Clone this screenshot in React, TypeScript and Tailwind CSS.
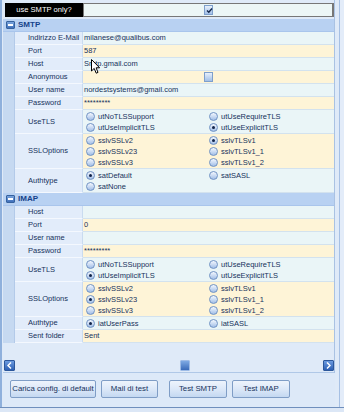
import React from 'react';

function Radio({ checked }: { checked?: boolean }) {
  return (
    <span className="relative inline-block w-[9px] h-[9px] shrink-0 rounded-full border border-[#6f92c4] bg-gradient-to-b from-[#f4f8fe] to-[#a3bfe7]">
      {checked && <span className="absolute left-[2px] top-[2px] w-[3px] h-[3px] rounded-full bg-[#0f2247]" />}
    </span>
  );
}

function Opt({ label, checked }: { label: string; checked?: boolean }) {
  return (
    <div className="flex items-center gap-[3px] h-[11px]">
      <Radio checked={checked} />
      <span className="whitespace-nowrap">{label}</span>
    </div>
  );
}

function Checkbox({ checked }: { checked?: boolean }) {
  return (
    <span className="relative inline-block w-[9px] h-[10px] border border-[#7e9fcc] bg-gradient-to-b from-[#e8f0fb] to-[#a2bfe7]">
      {checked && (
        <svg className="absolute left-[1px] top-[1px]" width="7" height="7" viewBox="0 0 7 7">
          <path d="M1 3.5 L2.8 5.3 L6 1.5" fill="none" stroke="#15294d" strokeWidth="1.4" />
        </svg>
      )}
    </span>
  );
}

type RowProps = {
  label: string;
  cream?: boolean;
  h: string;
  children?: React.ReactNode;
  multi?: boolean;
};

function Row({ label, cream, h, children, multi }: RowProps) {
  return (
    <div className={`flex ${h}`}>
      <div className="w-[68px] flex items-center pl-[13px] bg-[#e2ecfa] border-b border-r border-b-[#f4f8fe] border-r-[#c9dbf0]">
        <span className="whitespace-nowrap">{label}</span>
      </div>
      <div
        className={`flex-1 border-b border-[#d3e2ee] ${cream ? 'bg-[#fef4d7]' : 'bg-[#eaf5f7]'} ${
          multi ? 'flex flex-col pt-[1px] pl-[3px]' : 'flex items-center pl-[1px]'
        }`}
      >
        {children}
      </div>
    </div>
  );
}

function Pair({ a, b }: { a: [string, boolean?]; b?: [string, boolean?] }) {
  return (
    <div className="grid grid-cols-[123px_1fr]">
      <Opt label={a[0]} checked={a[1]} />
      {b ? <Opt label={b[0]} checked={b[1]} /> : <div />}
    </div>
  );
}

function GroupHeader({ title }: { title: string }) {
  return (
    <div className="h-[13px] flex items-center bg-[#b8d1f2] border-b border-[#a9c5ec]">
      <span className="ml-[3px] w-[9px] h-[8px] rounded-[1px] bg-gradient-to-b from-[#7aa4dd] to-[#3f6fba] border border-[#35629f] flex items-center justify-center">
        <span className="w-[5px] h-[1.5px] bg-white" />
      </span>
      <span className="ml-[3px] font-bold text-[8px] text-[#15428b]">{title}</span>
    </div>
  );
}

function ArrowBtn({ dir }: { dir: 'l' | 'r' }) {
  return (
    <div className="w-[11px] h-[11px] rounded-[1px] bg-gradient-to-b from-[#6c9be0] to-[#2d5fb3] border border-[#2c579b] flex items-center justify-center">
      <svg width="5" height="7" viewBox="0 0 5 7">
        <path d={dir === 'l' ? 'M4 0.5 L1 3.5 L4 6.5' : 'M1 0.5 L4 3.5 L1 6.5'} fill="none" stroke="#fff" strokeWidth="1.5" />
      </svg>
    </div>
  );
}

function Btn({ w, children }: { w: string; children: React.ReactNode }) {
  return (
    <div
      className={`${w} h-[18px] rounded-[2px] border border-[#7f9dc6] bg-gradient-to-b from-[#eef4fc] via-[#dce8f8] to-[#c4d8f1] flex items-center justify-center text-[7.8px] text-[#17325c] whitespace-nowrap`}
    >
      {children}
    </div>
  );
}

export default function App() {
  return (
    <div className="w-[344px] h-[412px] flex flex-col bg-[#dbe7f7] font-['Liberation_Sans',Arial,sans-serif] text-[7.5px] text-[#17325c] leading-none overflow-hidden relative">
      <div className="h-[407px] flex">
        <div className="w-[2px] bg-[#8fb0dc]" />
        <div className="w-[333px] flex flex-col">
          <div className="pl-[1px] flex flex-col border-r border-[#a9c2e3] bg-[#dfeaf8]">
            <div className="h-[3px]" />
            <div className="flex h-[14px] pl-[2px]">
              <div className="w-[78px] bg-black text-white flex items-center justify-center text-[7.6px]">use SMTP only?</div>
              <div className="flex-1 bg-[#ecf6f6] border border-r-2 border-[#777] flex items-center justify-center">
                <Checkbox checked />
              </div>
            </div>
            <div className="h-[2px]" />
            <GroupHeader title="SMTP" />
            <div className="flex">
              <div className="w-[12px] bg-[#c6d9f1] border-r border-[#b3cae9]" />
              <div className="flex-1 flex flex-col">
                <Row label="Indirizzo E-Mail" h="h-[13px]">milanese@qualibus.com</Row>
                <Row label="Port" cream h="h-[13px]">587</Row>
                <Row label="Host" h="h-[13px]">Smtp.gmail.com</Row>
                <Row label="Anonymous" cream h="h-[13px]">
                  <div className="flex-1 flex justify-center pr-[1px]">
                    <Checkbox />
                  </div>
                </Row>
                <Row label="User name" h="h-[13px]">nordestsystems@gmail.com</Row>
                <Row label="Password" cream h="h-[13px]">*********</Row>
                <Row label="UseTLS" h="h-[24px]" multi>
                  <Pair a={['utNoTLSSupport']} b={['utUseRequireTLS']} />
                  <Pair a={['utUseImplicitTLS']} b={['utUseExplicitTLS', true]} />
                </Row>
                <Row label="SSLOptions" cream h="h-[35px]" multi>
                  <Pair a={['sslvSSLv2']} b={['sslvTLSv1', true]} />
                  <Pair a={['sslvSSLv23']} b={['sslvTLSv1_1']} />
                  <Pair a={['sslvSSLv3']} b={['sslvTLSv1_2']} />
                </Row>
                <Row label="Authtype" h="h-[24px]" multi>
                  <Pair a={['satDefault', true]} b={['satSASL']} />
                  <Pair a={['satNone']} />
                </Row>
              </div>
            </div>
            <GroupHeader title="IMAP" />
            <div className="flex">
              <div className="w-[12px] bg-[#c6d9f1] border-r border-[#b3cae9]" />
              <div className="flex-1 flex flex-col">
                <Row label="Host" h="h-[13px]" />
                <Row label="Port" cream h="h-[13px]">0</Row>
                <Row label="User name" h="h-[13px]" />
                <Row label="Password" cream h="h-[13px]">*********</Row>
                <Row label="UseTLS" h="h-[24px]" multi>
                  <Pair a={['utNoTLSSupport']} b={['utUseRequireTLS']} />
                  <Pair a={['utUseImplicitTLS', true]} b={['utUseExplicitTLS']} />
                </Row>
                <Row label="SSLOptions" cream h="h-[35px]" multi>
                  <Pair a={['sslvSSLv2']} b={['sslvTLSv1']} />
                  <Pair a={['sslvSSLv23', true]} b={['sslvTLSv1_1']} />
                  <Pair a={['sslvSSLv3']} b={['sslvTLSv1_2']} />
                </Row>
                <Row label="Authtype" h="h-[13px]" multi>
                  <Pair a={['iatUserPass', true]} b={['iatSASL']} />
                </Row>
                <Row label="Sent folder" cream h="h-[13px]">Sent</Row>
              </div>
            </div>
            <div className="h-[17px]" />
            <div className="h-[11px] flex items-center pl-[1px]">
              <ArrowBtn dir="l" />
              <div className="flex-1 flex justify-center">
                <div className="w-[10px] h-[11px] rounded-[1px] bg-gradient-to-b from-[#7ea9e3] to-[#3a6bb9] border border-[#9dbbe6] ml-[32px]" />
              </div>
              <ArrowBtn dir="r" />
            </div>
            <div className="h-[1px]" />
            <div className="h-[1px] bg-[#b0c8e7]" />
          </div>
          <div className="flex-1 flex pt-[7px] pl-[8px] gap-[5px] bg-[#dde9f8]">
            <Btn w="w-[86px]">Carica config. di default</Btn>
            <Btn w="w-[57px]">Mail di test</Btn>
            <div className="w-[1px]" />
            <Btn w="w-[58px]">Test SMTP</Btn>
            <Btn w="w-[58px]">Test IMAP</Btn>
          </div>
        </div>
        <div className="flex-1 flex">
          <div className="w-[4px] bg-[#dfeaf8]" />
          <div className="w-[1px] bg-[#a6c0e4]" />
          <div className="flex-1 bg-[#e3ecf9]" />
        </div>
      </div>
      <div className="h-[1px] bg-[#6f8fbd]" />
      <div className="flex-1 bg-[#dce7f6]" />
      <svg className="absolute left-[91px] top-[59px]" width="10" height="16" viewBox="0 0 10 16">
        <path d="M0.5 0.5 L0.5 12 L3.2 9.4 L5.2 14.2 L7 13.4 L5.1 8.8 L8.6 8.8 Z" fill="#fff" stroke="#000" strokeWidth="1" strokeLinejoin="round" />
      </svg>
    </div>
  );
}
